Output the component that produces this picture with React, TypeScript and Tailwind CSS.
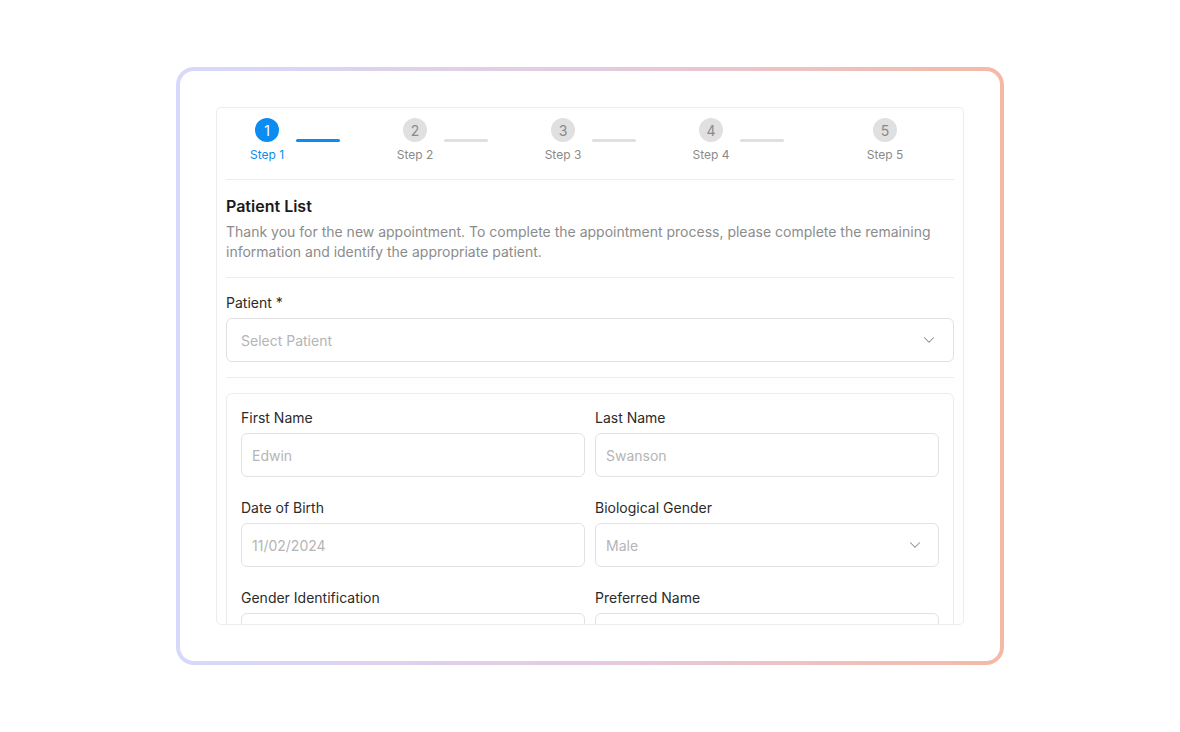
import { ChevronDown } from 'lucide-react'

const steps = [1, 2, 3, 4, 5]

function Field({ label, value, select }: { label: string; value?: string; select?: boolean }) {
  return (
    <div className="flex flex-col">
      <div className="text-[14px] leading-5 text-[#2b2b2b]">{label}</div>
      <div className="mt-[5px] flex h-[44px] items-center justify-between rounded-md border border-[#e2e2e2] pl-[10px] pr-[14px]">
        <span className="text-[14px] text-[#b5b5b5]">{value}</span>
        {select && <ChevronDown size={18} strokeWidth={1.4} className="text-[#8a8a8a]" />}
      </div>
    </div>
  )
}

export default function App() {
  return (
    <div className="flex h-[732px] w-full items-center justify-center bg-white font-['Inter',sans-serif]">
      <div className="rounded-[18px] bg-linear-to-r from-[#d6d9fc] via-[#e4cbe0] to-[#f4b9a5] p-[4px]">
        <div className="w-[820px] rounded-[14px] bg-white p-[36px]">
          <div className="h-[518px] overflow-hidden rounded-[5px] border border-[#ececec] px-[9px]">
            {/* stepper */}
            <div className="flex border-b border-[#ececec] pb-[16px] pl-[15px] pt-[10px]">
              {steps.map((n) => (
                <div key={n} className={n < 5 ? 'flex w-[148px]' : 'ml-[26px] flex'}>
                  <div className="flex w-[52px] flex-col items-center">
                    <div
                      className={
                        n === 1
                          ? 'flex h-[24px] w-[24px] items-center justify-center rounded-full bg-[#0b8cf0] text-[14px] text-white'
                          : 'flex h-[24px] w-[24px] items-center justify-center rounded-full bg-[#e0e0e0] text-[14px] text-[#8a8a8a]'
                      }
                    >
                      {n}
                    </div>
                    <div className={n === 1 ? 'mt-[5px] text-[12px] leading-4 text-[#0b8cf0]' : 'mt-[5px] text-[12px] leading-4 text-[#8a8a8a]'}>
                      Step {n}
                    </div>
                  </div>
                  {n < 5 && (
                    <div className={n === 1 ? 'ml-[3px] mt-[21px] h-[3px] w-[44px] rounded-full bg-[#0b8cf0]' : 'ml-[3px] mt-[21px] h-[3px] w-[44px] rounded-full bg-[#e0e0e0]'} />
                  )}
                </div>
              ))}
            </div>

            <div className="border-b border-[#ececec] pb-[15px] pt-[14px]">
              <div className="text-[16px] font-semibold leading-6 text-[#1a1a1a]">Patient List</div>
              <p className="mt-[4px] text-[14px] leading-5 text-[#8c8c8c]">
                Thank you for the new appointment. To complete the appointment process, please complete the remaining information and identify the appropriate patient.
              </p>
            </div>

            <div className="border-b border-[#ececec] pb-[15px] pt-[15px]">
              <div className="text-[14px] leading-5 text-[#2b2b2b]">Patient *</div>
              <div className="mt-[5px] flex h-[44px] items-center justify-between rounded-md border border-[#e2e2e2] pl-[14px] pr-[15px]">
                <span className="text-[14px] text-[#b5b5b5]">Select Patient</span>
                <ChevronDown size={18} strokeWidth={1.4} className="text-[#8a8a8a]" />
              </div>
            </div>

            <div className="mt-[15px] rounded-md border border-[#ececec] px-[14px] pt-[14px]">
              <div className="grid grid-cols-2 gap-x-[10px] gap-y-[21px]">
                <Field label="First Name" value="Edwin" />
                <Field label="Last Name" value="Swanson" />
                <Field label="Date of Birth" value="11/02/2024" />
                <Field label="Biological Gender" value="Male" select />
                <Field label="Gender Identification" />
                <Field label="Preferred Name" />
              </div>
            </div>
          </div>
        </div>
      </div>
    </div>
  )
}
